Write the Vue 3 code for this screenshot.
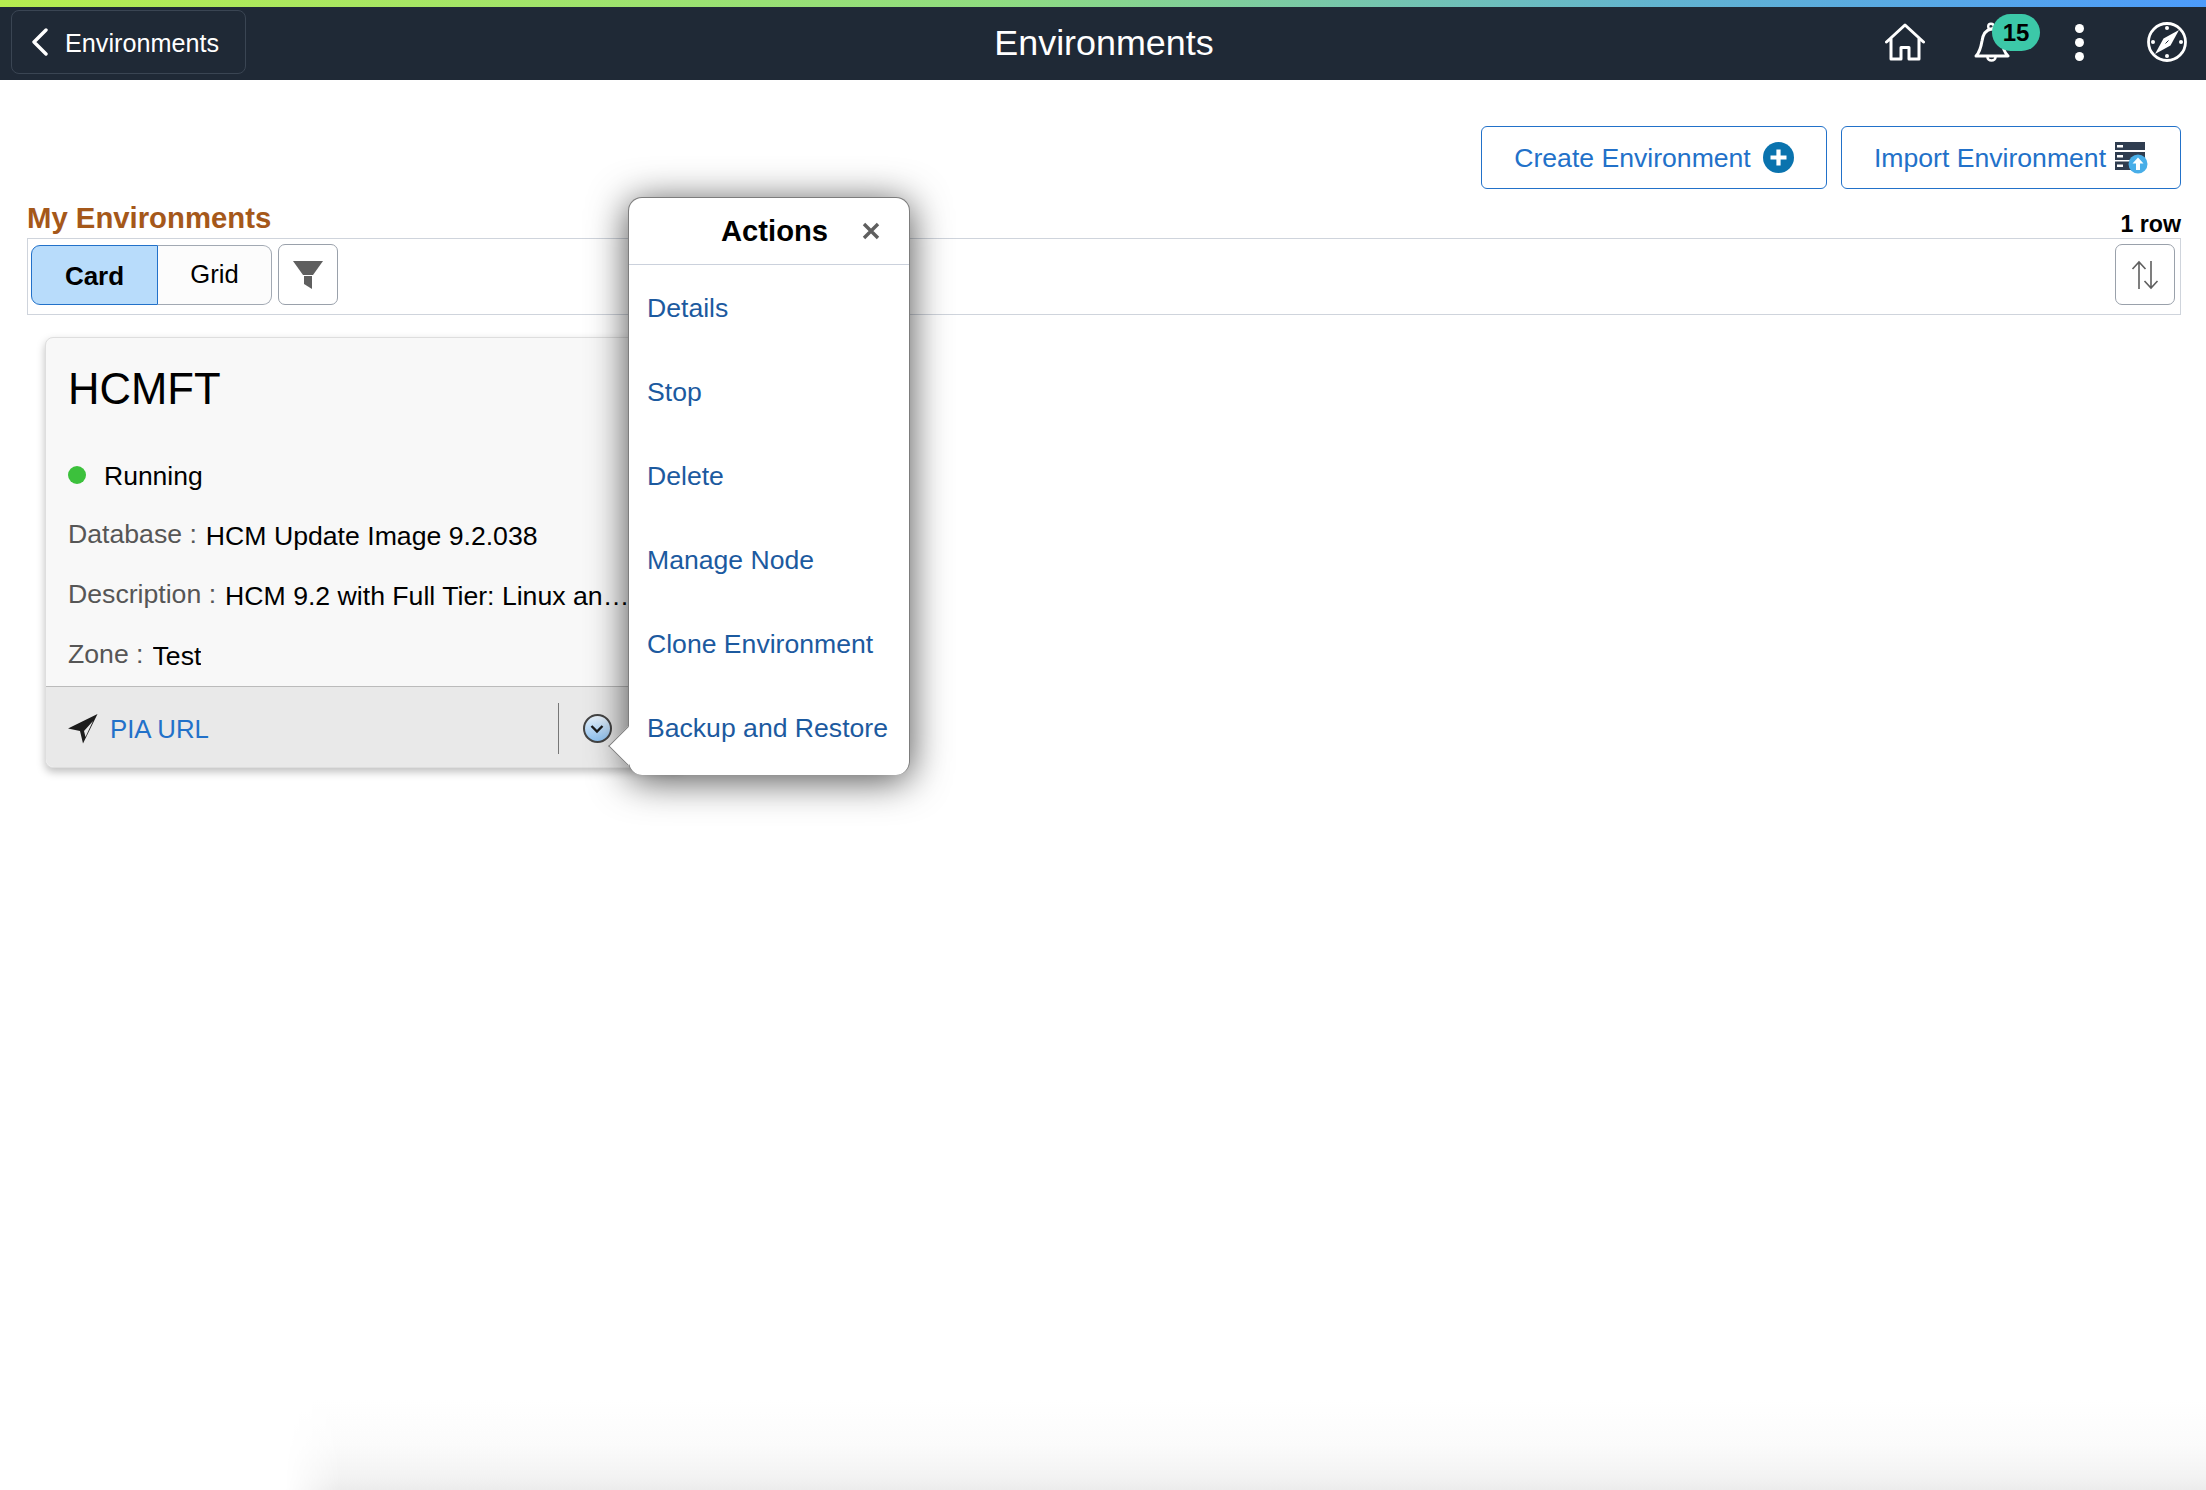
<template>
<div class="page">
    <div class="strip"></div>
    <header class="topbar">
        <div class="bar-left">
            <button class="back">
                <svg width="17" height="28" viewBox="0 0 17 28"><path d="M15 2 3 14l12 12" fill="none" stroke="#fff" stroke-width="3.400" stroke-linecap="round" stroke-linejoin="round"/></svg>
                <span>Environments</span>
            </button>
        </div>
        <h1 class="bar-title">Environments</h1>
        <div class="bar-right">
            <svg class="ic-home" width="40" height="38" viewBox="0 0 40 38"><path d="M1.500 19 20 2l18.500 17M6 15.500V36h10V24.500h8V36h10V15.500" fill="none" stroke="#fff" stroke-width="3" stroke-linecap="round" stroke-linejoin="round"/></svg>
            <div class="bell">
                <svg width="36" height="40" viewBox="0 0 36 40"><path d="M2 34c4-4 5-9 6-15C9 12 12 8 17 7s10 5 11 12c.5 6 2 11 6 15z" fill="none" stroke="#fff" stroke-width="3" stroke-linejoin="round"/><circle cx="17" cy="4.500" r="2.800" fill="none" stroke="#fff" stroke-width="2.400"/><path d="M13.500 35a4 3.500 0 0 0 8 0" fill="none" stroke="#fff" stroke-width="2.600"/></svg>
                <span class="badge">15</span>
            </div>
            <div class="dots"><i></i><i></i><i></i></div>
            <svg width="40" height="40" viewBox="0 0 40 40"><circle cx="20" cy="20" r="18.500" fill="none" stroke="#fff" stroke-width="2.800"/><path d="M32 8 23.500 23.500 8 32 16.500 16.500z" fill="#fff"/><path d="M21.500 18.500 18.500 21.500" stroke="#1f2936" stroke-width="1"/><circle cx="20" cy="6" r="2" fill="#fff"/><circle cx="20" cy="34" r="2" fill="#fff"/><circle cx="6" cy="20" r="2" fill="#fff"/><circle cx="34" cy="20" r="2" fill="#fff"/></svg>
        </div>
    </header>

    <div class="actions">
        <button class="btn create">
            <span>Create Environment</span>
            <svg width="31" height="31" viewBox="0 0 31 31"><circle cx="15.500" cy="15.500" r="15.500" fill="#0a73ae"/><path d="M15.500 7.500v16M7.500 15.500h16" stroke="#fff" stroke-width="4.200"/></svg>
        </button>
        <button class="btn import">
            <span>Import Environment</span>
            <svg width="33" height="32" viewBox="0 0 33 32">
                <rect x="0" y="0" width="30" height="8" fill="#2f3d50"/><rect x="0" y="10" width="30" height="8" fill="#2f3d50"/><rect x="0" y="19.500" width="30" height="8.500" fill="#2f3d50"/>
                <rect x="2" y="3" width="6" height="2.500" fill="#fff"/><rect x="2" y="13" width="6" height="2.500" fill="#fff"/><rect x="2" y="22.500" width="6" height="2.500" fill="#fff"/>
                <circle cx="23" cy="22" r="9.500" fill="#48aee8"/><path d="M23 15.500 17.500 21.500h3.500V28h4v-6.500h3.500z" fill="#fff"/>
            </svg>
        </button>
    </div>

    <div class="list-head">
        <h2 class="list-title">My Environments</h2>
        <span class="row-count">1 row</span>
    </div>

    <div class="toolbar">
        <div class="toggle">
            <button class="tg on">Card</button>
            <button class="tg">Grid</button>
        </div>
        <button class="tool filter">
            <svg width="30" height="28" viewBox="0 0 30 28"><path d="M0 0h30L20 14H10z" fill="#5f5f5f"/><path d="M11 15h8v13l-8-5z" fill="#5f5f5f"/></svg>
        </button>
        <button class="tool sort">
            <svg width="28" height="30" viewBox="0 0 28 30"><path d="M8 29V2M1.500 9 8 2l6.500 7M20 1v27M13.500 21l6.500 7 6.500-7" fill="none" stroke="#5f5f5f" stroke-width="1.600"/></svg>
        </button>
    </div>

    <div class="card">
        <div class="card-body">
            <div class="card-name">HCMFT</div>
            <div class="status"><i class="dot"></i>Running</div>
            <div v-for="f in campos" :key="f.label" class="field">
                <span class="lbl">{{ f.label }} :</span>
                <span class="val">{{ f.value }}</span>
            </div>
        </div>
        <div class="card-foot">
            <svg width="30" height="30" viewBox="0 0 30 30"><path fill-rule="evenodd" d="M29.500 0 0 14.500l12 2.500 3 12.500zM25 7 16 17l1.500 6z" fill="#1c1c1c"/></svg>
            <a class="pia">PIA URL</a>
            <span class="sep"></span>
            <span class="more">
                <svg width="16" height="10" viewBox="0 0 16 10"><path d="M2.500 2 8 7.500 13.500 2" fill="none" stroke="#1b1b1b" stroke-width="2.400"/></svg>
            </span>
        </div>
    </div>

    <div class="popup">
        <span class="tip"></span>
        <div class="pop-head">
            <span class="pop-title">Actions</span>
            <svg width="18" height="18" viewBox="0 0 18 18"><path d="M2 2l14 14M16 2 2 16" stroke="#5f5f5f" stroke-width="3.400"/></svg>
        </div>
        <a v-for="a in acciones" :key="a" class="pop-item">{{ a }}</a>
    </div>

    <div class="bottom-shade"></div>
</div>
</template>

<script setup>
const campos = [
    { label: 'Database', value: 'HCM Update Image 9.2.038' },
    { label: 'Description', value: 'HCM 9.2 with Full Tier: Linux and Windows' },
    { label: 'Zone', value: 'Test' }
]

const acciones = ['Details', 'Stop', 'Delete', 'Manage Node', 'Clone Environment', 'Backup and Restore']
</script>

<style>
html, body {
    margin: 0;
    overflow: hidden;
    background: #fff;
}
</style>

<style scoped>
.page {
    position: relative;
    width: 2206px;
    height: 1490px;
    overflow: hidden;
    background: #fff;
    font-family: "Liberation Sans", Arial, sans-serif;
    color: #000;
}

button {
    font-family: inherit;
    cursor: pointer;
}

.strip {
    height: 7px;
    background: linear-gradient(90deg, #b6ed50 0%, #8fdc80 45%, #62b4d0 75%, #4c9bfb 100%);
}

.topbar {
    height: 73px;
    background: #1f2936;
    display: grid;
    grid-template-columns: 1fr auto 1fr;
    align-items: center;
}

.bar-left {
    padding-left: 11px;
}

.back {
    width: 235px;
    height: 64px;
    margin-top: -3px;
    display: flex;
    align-items: center;
    gap: 17px;
    padding: 0 0 0 19px;
    background: transparent;
    border: 1px solid #3a4553;
    border-radius: 8px;
    color: #fff;
    font-size: 25.200px;
}

.back span {
    margin-top: 3px;
}

.bar-title {
    margin: 0;
    padding-left: 2px;
    font-size: 35.900px;
    font-weight: normal;
    color: #fff;
}

.bar-right {
    display: flex;
    justify-content: flex-end;
    align-items: center;
    padding-right: 19px;
    margin-top: -3px;
}

.ic-home {
    margin-right: 49px;
}

.bell {
    position: relative;
    width: 36px;
    height: 40px;
    margin-right: 65px;
}

.badge {
    position: absolute;
    left: 18px;
    top: -8px;
    width: 48px;
    height: 37px;
    border-radius: 19px;
    background: #3cc8a8;
    text-align: center;
    line-height: 37px;
    font-size: 24px;
    font-weight: bold;
}

.dots {
    display: flex;
    flex-direction: column;
    gap: 5px;
    margin-right: 63px;
}

.dots i {
    width: 9px;
    height: 9px;
    border-radius: 50%;
    background: #fff;
}

.actions {
    display: flex;
    justify-content: flex-end;
    gap: 14px;
    padding: 46px 25px 0 0;
}

.btn {
    height: 63px;
    display: flex;
    align-items: center;
    justify-content: center;
    gap: 12px;
    background: #fff;
    border: 1px solid #2271c9;
    border-radius: 6px;
    color: #2271c9;
    font-size: 26.600px;
    padding: 0;
    line-height: 33px;
}

.btn span {
    margin-top: 2px;
}

.create {
    width: 346px;
}

.import {
    width: 340px;
    gap: 9px;
}

.list-head {
    height: 38px;
    margin-top: 11px;
    padding: 0 25px 0 27px;
    display: flex;
    justify-content: space-between;
}

.list-title {
    margin: 0;
    line-height: 36px;
    font-size: 29.300px;
    font-weight: bold;
    color: #a5581a;
}

.row-count {
    align-self: flex-end;
    line-height: 26px;
    margin-bottom: 1px;
    font-size: 23.200px;
    font-weight: bold;
}

.toolbar {
    height: 77px;
    box-sizing: border-box;
    margin: 0 25px 0 27px;
    padding: 0 5px 4px 3px;
    border: 1px solid #cfd4dc;
    display: flex;
    align-items: center;
}

.toggle {
    display: flex;
    height: 60px;
    border-radius: 9px;
}

.tg {
    height: 60px;
    font-size: 25.600px;
    background: #fcfcfc;
    border: 1px solid #a2a9b3;
    border-left: none;
    border-radius: 0 9px 9px 0;
    width: 114px;
    padding: 0;
}

.tg.on {
    width: 127px;
    background: #b8dcfb;
    border: 1px solid #2271c9;
    border-radius: 9px 0 0 9px;
    font-size: 26px;
    font-weight: bold;
    padding: 4px 0 0;
}

.tool {
    height: 61px;
    width: 60px;
    padding: 0;
    display: flex;
    align-items: center;
    justify-content: center;
    background: #fff;
    border: 1px solid #9aa1ab;
    border-radius: 7px;
}

.filter {
    margin-left: 6px;
}

.sort {
    margin-left: auto;
}

.card {
    width: 640px;
    height: 431px;
    box-sizing: border-box;
    margin: 22px 0 0 45px;
    display: flex;
    flex-direction: column;
    background: #f8f8f8;
    border: 1px solid #dedede;
    border-radius: 8px;
    box-shadow: 0 4px 9px rgba(0, 0, 0, 0.25);
}

.card-body {
    flex: 1;
    padding: 24px 0 0 22px;
}

.card-name {
    font-size: 43.600px;
    line-height: 54px;
}

.status {
    display: flex;
    align-items: center;
    margin-top: 45px;
    font-size: 26.500px;
    line-height: 30px;
}

.dot {
    width: 18px;
    height: 18px;
    margin: -3px 18px 0 0;
    border-radius: 50%;
    background: #3cc13c;
}

.field {
    display: flex;
    align-items: center;
    margin-top: 30px;
    height: 30px;
    font-size: 26.650px;
}

.lbl {
    color: #565656;
    margin-right: 9px;
    margin-top: -4px;
}

.val {
    display: block;
    max-width: 406px;
    overflow: hidden;
    white-space: nowrap;
    text-overflow: ellipsis;
}

.card-foot {
    height: 81px;
    box-sizing: border-box;
    border-top: 1px solid #bbb;
    background: #e9e9e9;
    border-radius: 0 0 8px 8px;
    display: flex;
    align-items: center;
    padding-left: 22px;
}

.pia {
    margin: 5px 0 0 12px;
    font-size: 25.800px;
    color: #2271c9;
}

.sep {
    width: 1px;
    height: 51px;
    background: #777;
    margin: 3px 0 0 349px;
}

.more {
    width: 29px;
    height: 29px;
    box-sizing: border-box;
    margin: 3px 0 0 24px;
    display: flex;
    align-items: center;
    justify-content: center;
    border: 2px solid #444;
    border-radius: 50%;
    background: linear-gradient(180deg, #e8f2fb, #8fc3f2);
}

.card-foot > svg {
    margin-top: 3px;
}

.popup {
    position: absolute;
    left: 628px;
    top: 197px;
    width: 282px;
    height: 578px;
    box-sizing: border-box;
    background: #fff;
    border: 1px solid #7d7d7d;
    border-bottom: none;
    border-radius: 14px;
    box-shadow: 0 5px 38px rgba(0, 0, 0, 0.7);
}

.tip {
    position: absolute;
    left: -15px;
    top: 534px;
    width: 28px;
    height: 28px;
    box-sizing: border-box;
    background: #fff;
    border-left: 1px solid #7d7d7d;
    border-bottom: 1px solid #7d7d7d;
    transform: rotate(45deg);
}

.pop-head {
    height: 67px;
    box-sizing: border-box;
    padding: 0 29px 0 92px;
    display: flex;
    align-items: center;
    justify-content: space-between;
    border-bottom: 1px solid #cbd1dc;
}

.pop-title {
    font-size: 29.200px;
    font-weight: bold;
}

.pop-item {
    position: relative;
    display: flex;
    align-items: center;
    height: 84px;
    padding: 3px 0 0 18px;
    box-sizing: border-box;
    font-size: 26.600px;
    color: #1c5a9f;
}

.bottom-shade {
    position: absolute;
    left: 285px;
    right: 0;
    bottom: 0;
    height: 90px;
    background: linear-gradient(to top, #ececec 0%, #f3f3f3 15%, #fbfbfb 50%, #fff 100%);
    -webkit-mask-image: linear-gradient(90deg, transparent, #000 55px);
    mask-image: linear-gradient(90deg, transparent, #000 55px);
}
</style>
